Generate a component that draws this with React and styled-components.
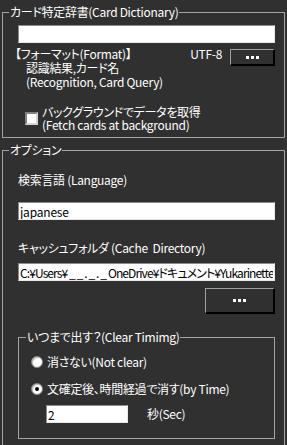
import React from 'react'
import styled, { createGlobalStyle } from 'styled-components'

const Global = createGlobalStyle`
  body {
    margin: 0;
    background: #303030;
  }
  * {
    box-sizing: border-box;
  }
`

function Dots() {
  return (
    <svg width="13" height="3" viewBox="0 0 13 3">
      <rect x="0" y="0" width="3" height="3" fill="#fff" />
      <rect x="5" y="0" width="3" height="3" fill="#fff" />
      <rect x="10" y="0" width="3" height="3" fill="#fff" />
    </svg>
  )
}

export default function App() {
  return (
    <Page>
      <Global />
      <Group>
        <Legend>カード特定辞書(Card Dictionary)</Legend>
        <TextBox defaultValue="" />
        <FormatRow>
          <FormatText>
            <div>【フォーマット(Format)】</div>
            <Indent>認識結果,カード名</Indent>
            <Indent>(Recognition, Card Query)</Indent>
          </FormatText>
          <Encoding>UTF-8</Encoding>
          <Button $w={45} $h={17}>
            <Dots />
          </Button>
        </FormatRow>
        <CheckRow>
          <CheckBox />
          <CheckLabel>
            <div>バックグラウンドでデータを取得</div>
            <div>(Fetch cards at background)</div>
          </CheckLabel>
        </CheckRow>
      </Group>

      <Group $gap={4} $bottom={40}>
        <Legend>オプション</Legend>
        <Label $top={10}>検索言語 (Language)</Label>
        <TextBox $top={15} defaultValue="japanese" />
        <Label $top={21}>キャッシュフォルダ (Cache&nbsp;&nbsp;Directory)</Label>
        <TextBox $top={8} $tight defaultValue="C:¥Users¥ _ _ . _ . _ OneDrive¥ドキュメント¥Yukarinette" />
        <ButtonRow>
          <Button $w={70} $h={26}>
            <Dots />
          </Button>
        </ButtonRow>
        <InnerGroup>
          <Legend $inner>いつまで出す？(Clear Timimg)</Legend>
          <RadioRow $top={9}>
            <Radio />
            <span>消さない(Not clear)</span>
          </RadioRow>
          <RadioRow $top={11}>
            <Radio $checked />
            <span>文確定後、時間経過で消す(by Time)</span>
          </RadioRow>
          <SecRow>
            <SmallBox defaultValue="2" />
            <span>秒(Sec)</span>
          </SecRow>
        </InnerGroup>
      </Group>
    </Page>
  )
}

const Page = styled.div`
  width: 287px;
  height: 445px;
  overflow: hidden;
  background: #303030;
  color: #fff;
  font-family: "Noto Sans CJK JP", "Liberation Sans", sans-serif;
  font-size: 12px;
  line-height: 14px;
  font-feature-settings: "palt";
  letter-spacing: -0.3px;
  padding: 4px 2px 0 2px;
`

const Group = styled.fieldset`
  margin: ${p => p.$gap || 0}px 0 0 0;
  padding: 5px 9px ${p => p.$bottom || 6}px 15px;
  border: 1px solid #a4a4a4;
  min-width: 0;
  display: flex;
  flex-direction: column;
`

const InnerGroup = styled.fieldset`
  margin: 15px 0 0 0;
  padding: 0 0 15px 12px;
  border: 1px solid #a4a4a4;
  min-width: 0;
  width: 257px;
`

const Legend = styled.legend`
  padding: 0 1px;
  margin-left: ${p => (p.$inner ? -5 : -9)}px;
  line-height: 16px;
  font-size: 12px;
  color: #fff;
  white-space: nowrap;
`

const TextBox = styled.input`
  display: block;
  margin: ${p => p.$top || 0}px 0 0 0;
  width: 257px;
  height: 18px;
  padding: 0 1px;
  background: #fff;
  color: #000;
  font-family: "Noto Sans CJK JP", "Liberation Sans", sans-serif;
  font-size: 12px;
  font-feature-settings: "palt";
  letter-spacing: ${p => (p.$tight ? -0.9 : -0.2)}px;
  border: 1px solid;
  border-color: #8c8c8c #e8e8e8 #e8e8e8 #8c8c8c;
  outline: none;
  white-space: nowrap;
  overflow: hidden;
`

const FormatRow = styled.div`
  display: flex;
  align-items: flex-start;
  margin-top: 4px;
`

const FormatText = styled.div`
  flex: 1;
  margin-left: -3px;
  white-space: nowrap;
`

const Indent = styled.div`
  padding-left: 11px;
`

const Encoding = styled.span`
  margin-right: 8px;
`

const Button = styled.div`
  width: ${p => p.$w}px;
  height: ${p => p.$h}px;
  flex: none;
  display: flex;
  align-items: center;
  justify-content: center;
  background: #303030;
  border-top: 1px solid #a0a0a0;
  border-left: 1px solid #a0a0a0;
  border-right: 2px solid #000;
  border-bottom: 2px solid #000;
  margin-top: 2px;
`

const CheckRow = styled.div`
  display: flex;
  align-items: center;
  margin: 16px 0 0 7px;
  line-height: 13px;
`

const CheckBox = styled.div`
  width: 13px;
  height: 13px;
  flex: none;
  background: #fff;
  border: 2px solid;
  border-color: #808080 #d4d4d4 #d4d4d4 #808080;
  margin-right: 4px;
`

const CheckLabel = styled.div`
  white-space: nowrap;
`

const Label = styled.div`
  margin-top: ${p => p.$top || 0}px;
  white-space: nowrap;
`

const ButtonRow = styled.div`
  display: flex;
  justify-content: flex-end;
  width: 257px;
  margin-top: 5px;
`

const RadioRow = styled.div`
  display: flex;
  align-items: center;
  height: 16px;
  margin-top: ${p => p.$top || 0}px;
  white-space: nowrap;
`

const Radio = styled.div`
  width: 12px;
  height: 12px;
  flex: none;
  border-radius: 50%;
  background: #fff;
  border: 1px solid #808080;
  box-shadow: inset 1px 1px 0 #c0c0c0;
  margin-right: 4px;
  display: flex;
  align-items: center;
  justify-content: center;
  &::after {
    content: '';
    display: ${p => (p.$checked ? 'block' : 'none')};
    width: 4px;
    height: 4px;
    border-radius: 50%;
    background: #000;
  }
`

const SecRow = styled.div`
  display: flex;
  align-items: center;
  margin: 8px 0 0 15px;
  gap: 19px;
`

const SmallBox = styled(TextBox)`
  width: 82px;
  margin: 0;
`
